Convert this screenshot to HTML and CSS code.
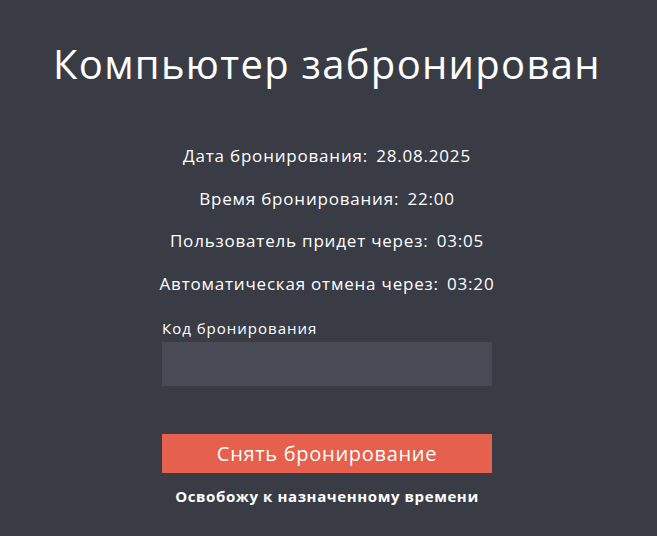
FILE: index.html
```html
<!DOCTYPE html>
<html lang="ru">
<head>
<meta charset="utf-8">
<title>Компьютер забронирован</title>
<link rel="stylesheet" href="styles.css">
</head>
<body>
<main class="page">
  <h1 class="title">Компьютер забронирован</h1>
  <div class="info">
    <div class="row">Дата бронирования: <span class="val">28.08.2025</span></div>
    <div class="row">Время бронирования: <span class="val">22:00</span></div>
    <div class="row">Пользователь придет через: <span class="val">03:05</span></div>
    <div class="row">Автоматическая отмена через: <span class="val">03:20</span></div>
  </div>
  <form class="form">
    <label class="label" for="code">Код бронирования</label>
    <input class="input" id="code" type="text">
    <button class="btn" type="button">Снять бронирование</button>
    <div class="note">Освобожу к назначенному времени</div>
  </form>
</main>
</body>
</html>
```
FILE: styles.css
```css
html, body {
  margin: 0;
  padding: 0;
  background: #393c45;
  color: #ffffff;
  font-family: "Open Sans", "DejaVu Sans", sans-serif;
}
.page {
  display: flex;
  flex-direction: column;
  align-items: center;
  padding-top: 40px;
  padding-right: 3px;
}
.title {
  margin: 0;
  font-size: 40px;
  line-height: 48px;
  font-weight: 400;
  letter-spacing: 1.3px;
}
.info {
  margin-top: 47px;
  display: flex;
  flex-direction: column;
  align-items: center;
}
.row {
  height: 42.6px;
  line-height: 42.6px;
  font-size: 17px;
  letter-spacing: 0.8px;
}
.val {
  margin-left: 3px;
}
.form {
  width: 330px;
  margin-top: 14px;
  display: flex;
  flex-direction: column;
}
.label {
  font-size: 15px;
  line-height: 18px;
  letter-spacing: 1px;
}
.input {
  margin-top: 5px;
  height: 44px;
  box-sizing: border-box;
  border: none;
  outline: none;
  background: #484b55;
  color: #fff;
  padding: 0 10px;
  font: inherit;
}
.btn {
  margin-top: 48px;
  height: 39px;
  border: none;
  background: #e5604d;
  color: #fff;
  font-family: inherit;
  font-size: 20px;
  font-weight: 400;
  letter-spacing: 0.7px;
  padding: 0;
}
.note {
  margin-top: 14px;
  text-align: center;
  font-size: 15px;
  line-height: 18px;
  font-weight: 700;
  letter-spacing: 0.6px;
}
```
